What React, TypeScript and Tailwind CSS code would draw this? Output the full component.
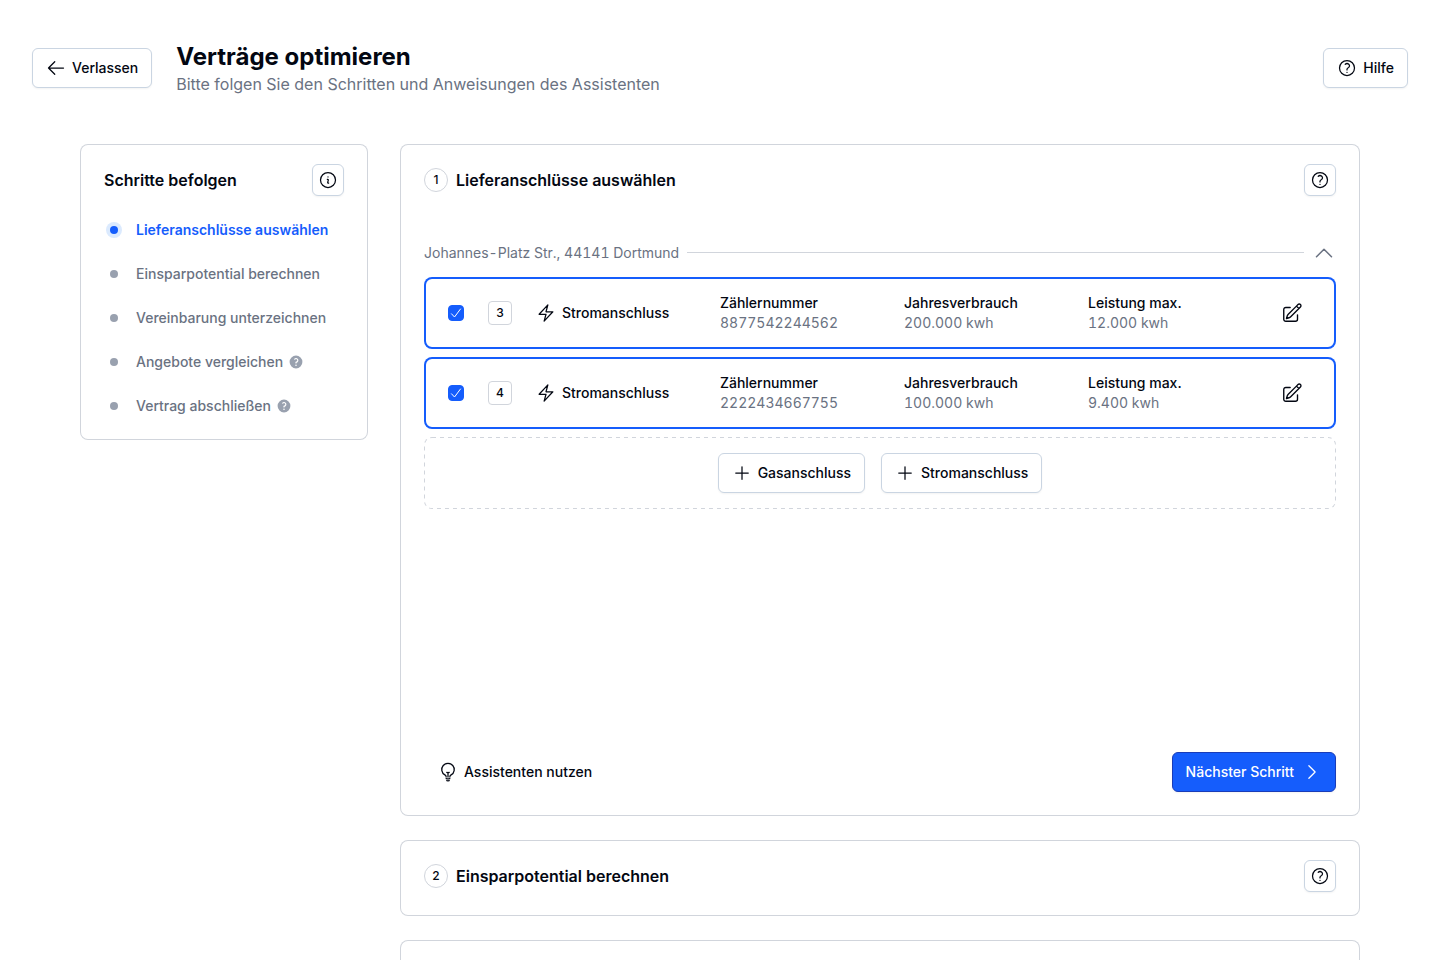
import type { ReactNode } from "react";
import {
  HiOutlineArrowLeft,
  HiOutlineBolt,
  HiOutlineChevronRight,
  HiOutlineChevronUp,
  HiOutlineInformationCircle,
  HiOutlineLightBulb,
  HiOutlinePencilSquare,
  HiOutlinePlus,
  HiOutlineQuestionMarkCircle,
  HiMiniQuestionMarkCircle,
} from "react-icons/hi2";

const steps = [
  { label: "Lieferanschlüsse auswählen", active: true, hint: false },
  { label: "Einsparpotential berechnen", active: false, hint: false },
  { label: "Vereinbarung unterzeichnen", active: false, hint: false },
  { label: "Angebote vergleichen", active: false, hint: true },
  { label: "Vertrag abschließen", active: false, hint: true },
];

const connections = [
  { id: 3, meter: "8877542244562", usage: "200.000 kwh", power: "12.000 kwh" },
  { id: 4, meter: "2222434667755", usage: "100.000 kwh", power: "9.400 kwh" },
];

function Button({ children }: { children: ReactNode }) {
  return (
    <button
      type="button"
      className="flex h-10 shrink-0 items-center gap-1.5 rounded-md border border-slate-300 bg-white px-[13px] text-sm font-medium shadow-xs"
    >
      {children}
    </button>
  );
}

function IconButton({ label, children }: { label: string; children: ReactNode }) {
  return (
    <button
      type="button"
      aria-label={label}
      className="flex size-8 shrink-0 items-center justify-center rounded-md border border-slate-300 bg-white shadow-xs"
    >
      {children}
    </button>
  );
}

function StepCard({ number, title, children }: { number: number; title: string; children?: ReactNode }) {
  return (
    <section className="rounded-lg px-6 pt-5 pb-6 ring-1 ring-gray-300 ring-inset">
      <div className="flex items-center gap-2">
        <span className="flex size-6 items-center justify-center rounded-full border border-gray-300 text-xs font-medium">
          {number}
        </span>
        <h2 className="flex-1 text-base font-semibold">{title}</h2>
        <IconButton label="Hilfe zum Schritt">
          <HiOutlineQuestionMarkCircle className="size-5" />
        </IconButton>
      </div>
      {children}
    </section>
  );
}

function Detail({ label, value }: { label: string; value: string }) {
  return (
    <div>
      <dt className="font-medium">{label}</dt>
      <dd className="text-gray-500 tabular-nums">{value}</dd>
    </div>
  );
}

function ConnectionRow({ id, meter, usage, power }: (typeof connections)[number]) {
  return (
    <li className="flex h-18 items-center rounded-lg px-6 text-sm ring-2 ring-blue-600 ring-inset">
      <label className="relative flex size-4 shrink-0">
        <input
          type="checkbox"
          defaultChecked
          aria-label={`Stromanschluss ${id}`}
          className="peer size-4 appearance-none rounded border border-gray-300 checked:border-blue-600 checked:bg-blue-600"
        />
        <svg
          viewBox="0 0 16 16"
          fill="none"
          stroke="white"
          strokeLinecap="round"
          strokeLinejoin="round"
          className="pointer-events-none absolute inset-0 hidden size-4 peer-checked:block"
        >
          <path d="M3.5 8.8 6.5 12 12.5 4" />
        </svg>
      </label>
      <span className="mx-6 flex size-6 shrink-0 items-center justify-center rounded border border-gray-300 text-xs font-medium">
        {id}
      </span>
      <div className="grid flex-1 grid-cols-4 items-center">
        <div className="flex items-center gap-1.5 font-medium">
          <HiOutlineBolt className="size-5" />
          Stromanschluss
        </div>
        <dl className="col-span-3 grid grid-cols-3">
          <Detail label="Zählernummer" value={meter} />
          <Detail label="Jahresverbrauch" value={usage} />
          <Detail label="Leistung max." value={power} />
        </dl>
      </div>
      <button type="button" aria-label="Bearbeiten" className="flex size-10 shrink-0 items-center justify-center">
        <HiOutlinePencilSquare className="size-[22px]" />
      </button>
    </li>
  );
}

export default function App() {
  return (
    <div className="h-screen overflow-y-auto bg-white font-['Inter',sans-serif] text-gray-950 [scrollbar-width:none]">
      <header className="flex items-center gap-6 px-8 pt-10 pb-12">
        <Button>
          <HiOutlineArrowLeft className="size-5" />
          Verlassen
        </Button>
        <div className="flex-1">
          <h1 className="text-2xl leading-[33px] font-bold">Verträge optimieren</h1>
          <p className="text-base leading-[23px] text-gray-500">
            Bitte folgen Sie den Schritten und Anweisungen des Assistenten
          </p>
        </div>
        <Button>
          <HiOutlineQuestionMarkCircle className="size-5" />
          Hilfe
        </Button>
      </header>

      <div className="mx-auto flex max-w-7xl items-start gap-8 pb-10">
        <nav aria-label="Schritte" className="w-72 shrink-0 rounded-lg px-6 pt-5 pb-6 ring-1 ring-gray-300 ring-inset">
          <div className="flex items-center justify-between">
            <h2 className="text-base font-semibold">Schritte befolgen</h2>
            <IconButton label="Information">
              <HiOutlineInformationCircle className="size-5" />
            </IconButton>
          </div>
          <ol className="mt-6 flex flex-col gap-6 text-sm font-medium">
            {steps.map((step) => (
              <li key={step.label}>
                <a
                  href="#"
                  aria-current={step.active ? "step" : undefined}
                  className={
                    step.active
                      ? "flex items-center gap-3 font-semibold text-blue-600"
                      : "flex items-center gap-3 text-gray-500"
                  }
                >
                  <span className="flex size-5 items-center justify-center">
                    {step.active ? (
                      <span className="flex size-4 items-center justify-center rounded-full bg-blue-100">
                        <span className="size-2 rounded-full bg-blue-600" />
                      </span>
                    ) : (
                      <span className="size-2 rounded-full bg-gray-400" />
                    )}
                  </span>
                  <span className="flex items-center gap-[5px]">
                    {step.label}
                    {step.hint && <HiMiniQuestionMarkCircle className="size-4 text-gray-400" />}
                  </span>
                </a>
              </li>
            ))}
          </ol>
        </nav>

        <main className="flex min-w-0 flex-1 flex-col gap-6">
          <StepCard number={1} title="Lieferanschlüsse auswählen">
            <div className="mt-11 min-h-128">
              <div className="flex h-[25px] items-center gap-2">
                <span className="text-sm text-gray-500 tabular-nums">Johannes-Platz Str., 44141 Dortmund</span>
                <span className="h-px flex-1 bg-gray-300" />
                <button type="button" aria-label="Adresse einklappen" className="text-gray-500">
                  <HiOutlineChevronUp className="size-6" />
                </button>
              </div>
              <ul className="mt-3 flex flex-col gap-2">
                {connections.map((connection) => (
                  <ConnectionRow key={connection.id} {...connection} />
                ))}
                <li className="relative flex h-18 items-center justify-center gap-4">
                  <svg
                    aria-hidden="true"
                    className="pointer-events-none absolute inset-0 size-full overflow-hidden rounded-lg text-gray-300"
                  >
                    <rect
                      width="100%"
                      height="100%"
                      rx="8"
                      fill="none"
                      stroke="currentColor"
                      strokeWidth="2"
                      strokeDasharray="4 4"
                    />
                  </svg>
                  <Button>
                    <HiOutlinePlus className="size-5" />
                    Gasanschluss
                  </Button>
                  <Button>
                    <HiOutlinePlus className="size-5" />
                    Stromanschluss
                  </Button>
                </li>
              </ul>
            </div>
            <div className="flex items-center justify-between text-sm font-medium">
              <button type="button" className="flex h-10 items-center gap-1.5 px-3.5">
                <HiOutlineLightBulb className="size-5" />
                Assistenten nutzen
              </button>
              <button
                type="button"
                className="flex h-10 items-center gap-2 rounded-md border border-blue-800 bg-blue-600 px-[13px] text-white shadow-xs"
              >
                Nächster Schritt
                <HiOutlineChevronRight className="size-5" />
              </button>
            </div>
          </StepCard>
          <StepCard number={2} title="Einsparpotential berechnen" />
          <StepCard number={3} title="Vereinbarung unterzeichnen" />
        </main>
      </div>
    </div>
  );
}
